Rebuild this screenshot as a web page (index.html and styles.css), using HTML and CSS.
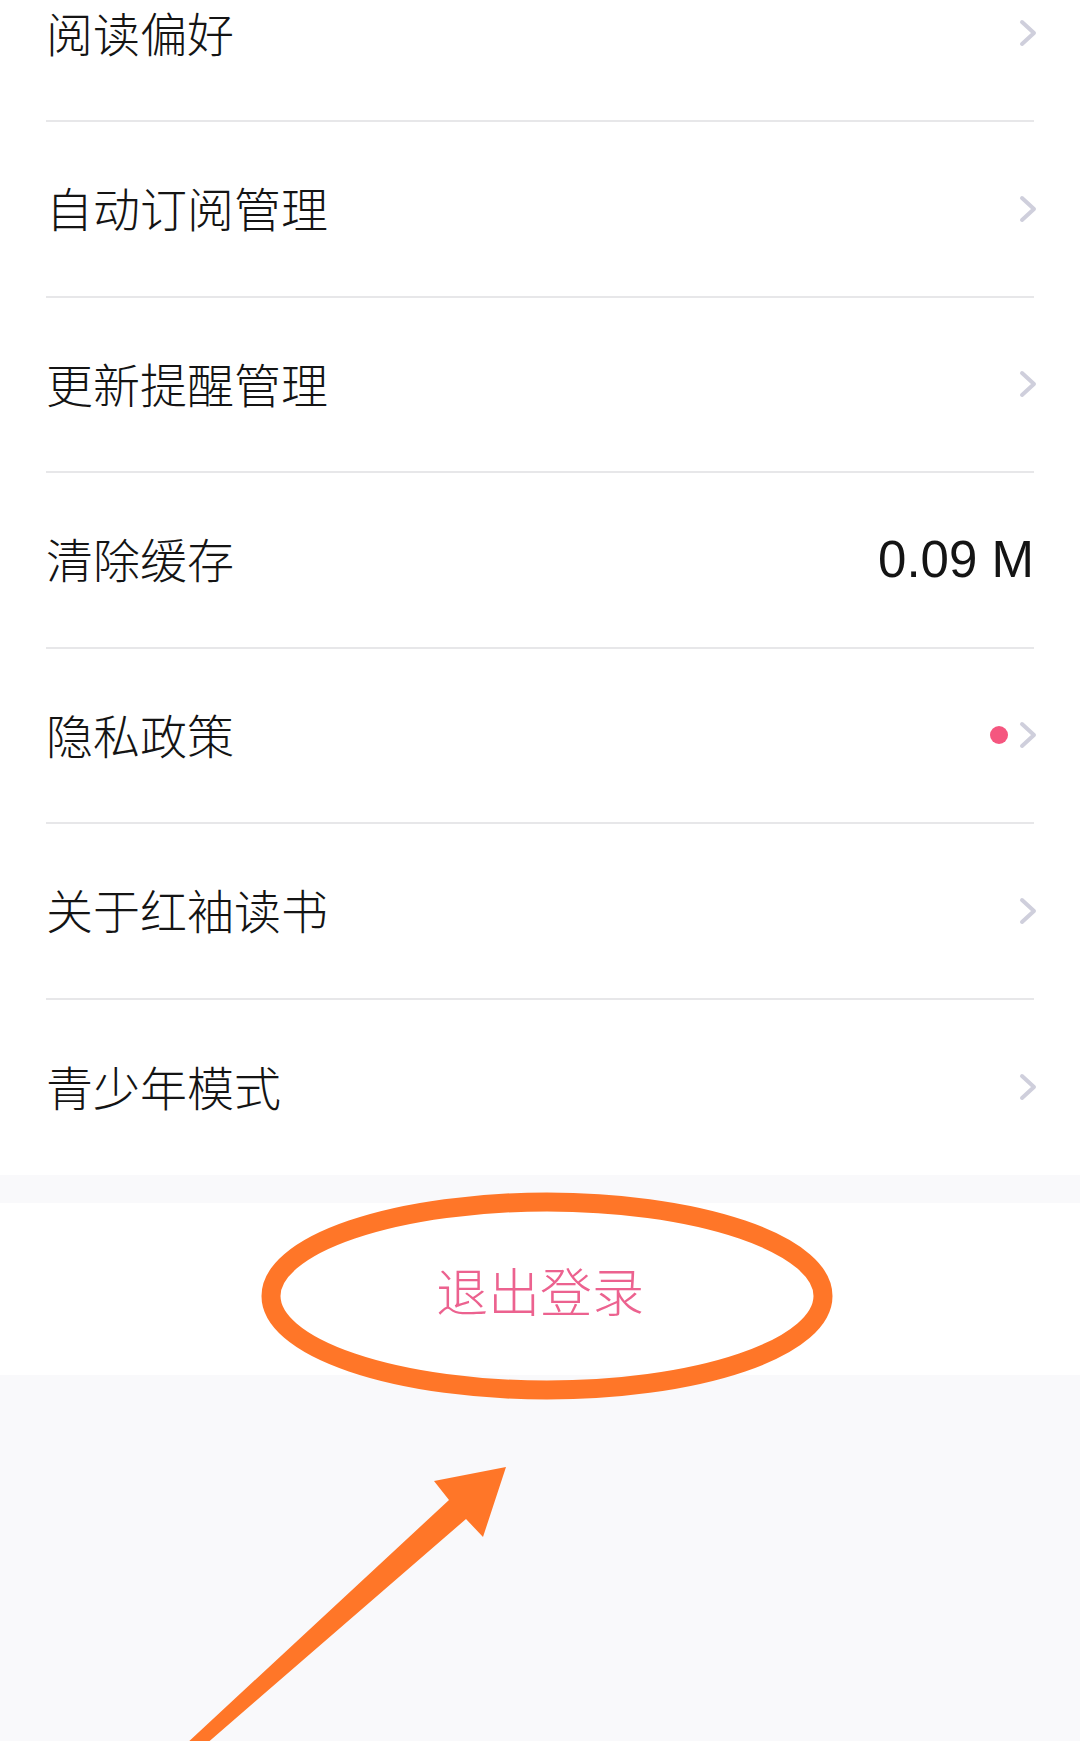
FILE: index.html
```html
<!DOCTYPE html>
<html lang="zh-CN">
<head>
  <meta charset="UTF-8">
  <title>设置</title>
  <link rel="stylesheet" href="styles.css">
</head>
<body>
  <div class="page">

    <ul class="menu">
      <li class="menu-item">
        <div class="menu-inner">
          <span class="label">阅读偏好</span>
          <svg class="chevron" viewBox="0 0 18 28"><polyline points="3,3 15,14 3,25" /></svg>
        </div>
      </li>
      <li class="menu-item">
        <div class="menu-inner">
          <span class="label">自动订阅管理</span>
          <svg class="chevron" viewBox="0 0 18 28"><polyline points="3,3 15,14 3,25" /></svg>
        </div>
      </li>
      <li class="menu-item">
        <div class="menu-inner">
          <span class="label">更新提醒管理</span>
          <svg class="chevron" viewBox="0 0 18 28"><polyline points="3,3 15,14 3,25" /></svg>
        </div>
      </li>
      <li class="menu-item">
        <div class="menu-inner">
          <span class="label">清除缓存</span>
          <span class="value">0.09 M</span>
        </div>
      </li>
      <li class="menu-item">
        <div class="menu-inner">
          <span class="label">隐私政策</span>
          <span class="extra">
            <span class="dot"></span>
            <svg class="chevron" viewBox="0 0 18 28"><polyline points="3,3 15,14 3,25" /></svg>
          </span>
        </div>
      </li>
      <li class="menu-item">
        <div class="menu-inner">
          <span class="label">关于红袖读书</span>
          <svg class="chevron" viewBox="0 0 18 28"><polyline points="3,3 15,14 3,25" /></svg>
        </div>
      </li>
      <li class="menu-item">
        <div class="menu-inner">
          <span class="label">青少年模式</span>
          <svg class="chevron" viewBox="0 0 18 28"><polyline points="3,3 15,14 3,25" /></svg>
        </div>
      </li>
    </ul>

    <div class="gap"></div>

    <div class="logout">退出登录</div>

    <!-- hand-drawn annotation on top of the screenshot -->
    <svg class="annotation" viewBox="0 0 1080 1741">
      <ellipse cx="547" cy="1296" rx="276" ry="94" />
      <polygon points="506,1467 434,1481 449,1500 185,1745 205,1745 466,1519 483,1537" />
    </svg>

  </div>
</body>
</html>
```

FILE: styles.css
```css
html, body {
  margin: 0;
  padding: 0;
}
body {
  background: #f9f9fb;
  font-family: "Noto Sans CJK SC", sans-serif;
  color: #141414;
}
.page {
  position: relative;
  height: 1741px;
  overflow: hidden;
}

/* settings list */
.menu {
  list-style: none;
  margin: -53.5px 0 0;
  padding: 0;
  background: #fff;
}
.menu-item {
  padding: 0 46px;
}
.menu-inner {
  height: 173.5px;
  display: flex;
  align-items: center;
  justify-content: space-between;
  border-bottom: 2px solid #e7e7e9;
}
.menu-item:last-child .menu-inner {
  border-bottom: none;
  height: 175.5px;
}
.label {
  font-size: 47px;
  font-weight: 300;
  line-height: 1;
  margin-top: -4px;
}
.value {
  font-family: "Liberation Sans", "Noto Sans CJK SC", sans-serif;
  font-size: 51px;
  line-height: 1;
  color: #141414;
}
.extra {
  display: flex;
  align-items: center;
  gap: 11px;
}
.dot {
  width: 18px;
  height: 18px;
  border-radius: 50%;
  background: #f5567f;
}
.chevron {
  width: 18px;
  height: 28px;
  margin-right: -3px;
}
.chevron polyline {
  fill: none;
  stroke: #cfcfdc;
  stroke-width: 4;
  stroke-linecap: round;
  stroke-linejoin: round;
}

.gap {
  height: 28px;
}

.logout {
  height: 172px;
  background: #fff;
  display: flex;
  align-items: center;
  justify-content: center;
  font-size: 52px;
  font-weight: 300;
  color: #ec628f;
}

.annotation {
  position: absolute;
  top: 0;
  left: 0;
  width: 1080px;
  height: 1741px;
  pointer-events: none;
}
.annotation ellipse {
  fill: none;
  stroke: #ff7628;
  stroke-width: 19;
}
.annotation polygon {
  fill: #ff7628;
}
```
